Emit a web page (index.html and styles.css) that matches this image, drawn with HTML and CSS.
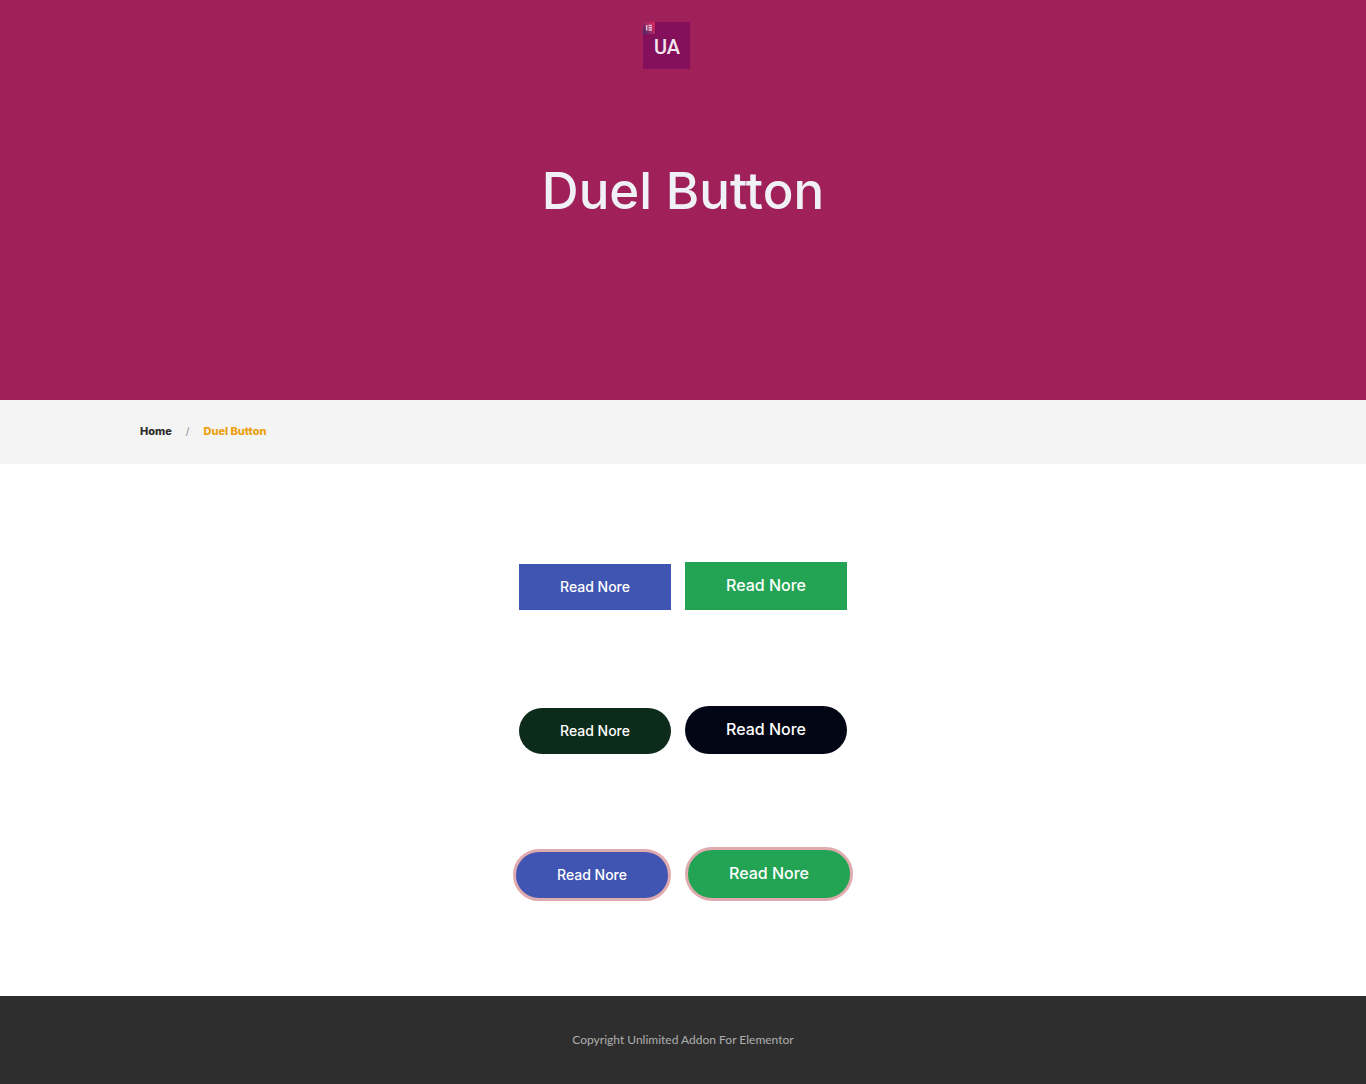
FILE: index.html
```html
<!DOCTYPE html>
<html lang="en">
<head>
<meta charset="utf-8">
<meta name="viewport" content="width=device-width, initial-scale=1">
<title>Duel Button</title>
<link rel="stylesheet" href="styles.css">
</head>
<body>
<header class="hero">
  <a class="logo" href="#" aria-label="Unlimited Addon">
    <svg width="47" height="47" viewBox="0 0 47 47">
      <defs>
        <linearGradient id="badge" x1="0" y1="1" x2="1" y2="0.3">
          <stop offset="0" stop-color="#3c2a70"/>
          <stop offset="0.6" stop-color="#a92862"/>
          <stop offset="1" stop-color="#d0265a"/>
        </linearGradient>
      </defs>
      <rect width="47" height="47" fill="#84105c"/>
      <rect width="12" height="12" fill="url(#badge)"/>
      <path d="M3.7 3v5.500M5.500 3.500H9M5.500 5.800H9M5.500 8H9" stroke="#e3c3d8" stroke-width="1.4" fill="none"/>
      <text class="logo-text" x="24" y="32" text-anchor="middle">UA</text>
    </svg>
  </a>
  <h1 class="title">Duel Button</h1>
</header>
<nav class="breadcrumb" aria-label="Breadcrumb">
  <div class="container">
    <a class="crumb" href="#">Home</a>
    <span class="slash">/</span>
    <span class="crumb current">Duel Button</span>
  </div>
</nav>
<main class="content">
  <div class="pair">
    <button class="btn blue" type="button">Read Nore</button>
    <button class="btn large green" type="button">Read Nore</button>
  </div>
  <div class="pair">
    <button class="btn round forest" type="button">Read Nore</button>
    <button class="btn large round navy" type="button">Read Nore</button>
  </div>
  <div class="pair">
    <button class="btn round outlined blue" type="button">Read Nore</button>
    <button class="btn large round outlined green" type="button">Read Nore</button>
  </div>
</main>
<footer class="footer">Copyright Unlimited Addon For Elementor</footer>
</body>
</html>
```
FILE: styles.css
```css
* {
  box-sizing: border-box;
}

body {
  margin: 0;
  background: #fff;
  font-family: Inter, "Open Sans", sans-serif;
}

.hero {
  display: flex;
  flex-direction: column;
  align-items: center;
  min-height: 400px;
  padding-top: 22px;
  background: #a02059;
}

.logo {
  display: block;
  height: 47px;
  margin-right: 33px;
}

.logo-text {
  fill: #f3e6ef;
  font: 500 20px Roboto, sans-serif;
}

.title {
  margin: 90px 0 0;
  color: #f0f1f6;
  font-size: 51px;
  font-weight: 500;
  line-height: 64px;
}

.breadcrumb {
  padding: 19px 0 21px;
  background: #f4f4f4;
}

.container {
  display: flex;
  align-items: center;
  gap: 14px;
  max-width: 1110px;
  margin: 0 auto;
  padding: 0 12px;
  line-height: 24px;
}

.crumb {
  color: #2d2d2d;
  font-size: 11px;
  font-weight: 800;
  text-decoration: none;
}

.current {
  color: #eaa00f;
}

.slash {
  color: #888;
  font-size: 10px;
}

.content {
  display: flex;
  flex-direction: column;
  gap: 90px;
  padding: 95px 0;
}

.pair {
  display: flex;
  justify-content: center;
  align-items: flex-end;
  gap: 14px;
}

.btn {
  min-width: 152px;
  height: 46px;
  margin: 3px 0;
  padding: 0 30px 2px;
  border: 0;
  color: #fff;
  font-family: inherit;
  font-size: 14px;
  font-weight: 500;
  cursor: pointer;
}

.large {
  min-width: 162px;
  height: 48px;
  font-size: 16px;
}

.round {
  border-radius: 27px;
}

.outlined {
  min-width: 158px;
  height: 52px;
  margin: 0;
  border: 3px solid #dfabae;
}

.outlined.large {
  min-width: 168px;
  height: 54px;
}

.blue {
  background-color: #4054b2;
}

.green {
  background-color: #23a455;
}

.forest {
  background-color: #0d2b1a;
}

.navy {
  background-color: #020514;
}

.footer {
  padding: 32px 16px 40px;
  background: #2e2e2e;
  color: #afafaf;
  font-family: Lato, sans-serif;
  font-size: 12px;
  line-height: 24px;
  text-align: center;
}
```
